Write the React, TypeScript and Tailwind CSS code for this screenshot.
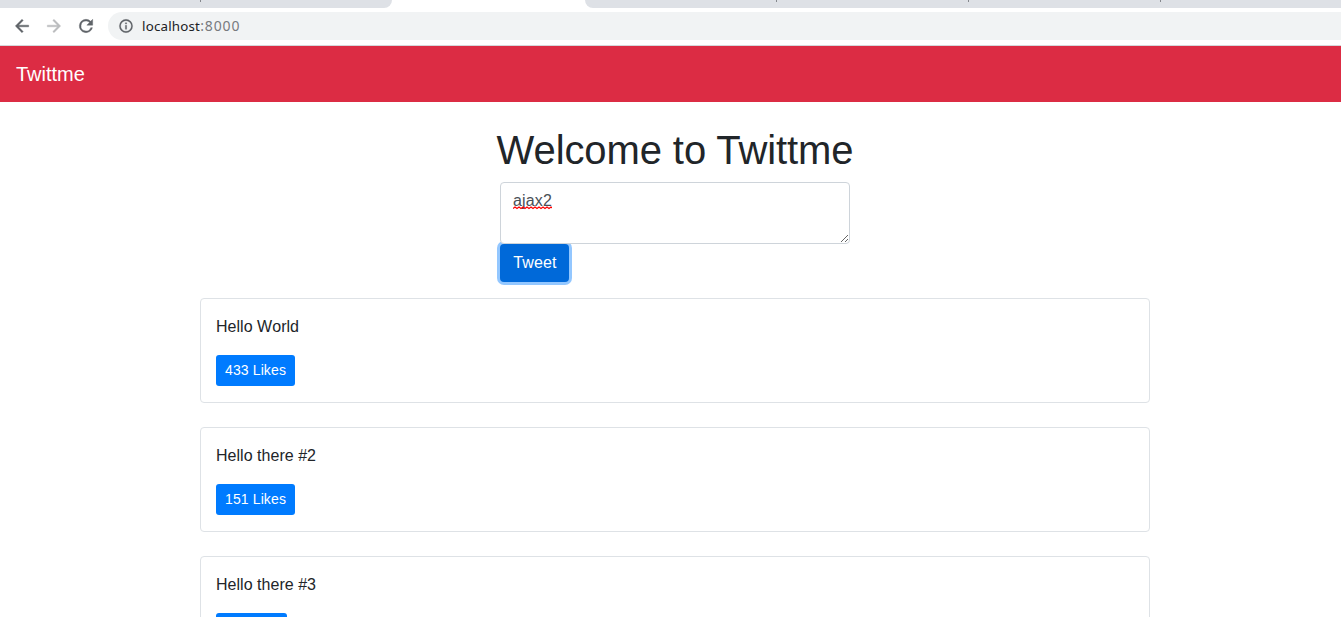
/**
 * Twittme home page
 *
 * Browser bar, brand navbar, tweet form and the tweet feed.
 */

interface Tweet {
    id: number
    content: string
    likes: number
}

const tweets: Tweet[] = [
    { id: 1, content: 'Hello World', likes: 433 },
    { id: 2, content: 'Hello there #2', likes: 151 },
    { id: 3, content: 'Hello there #3', likes: 12 },
]

function BrowserBar() {
    return (
        <div className="h-[46px] border-b border-[#d5d7da] bg-white">
            {/* Tab strip */}
            <div className="flex h-2">
                <div className="flex w-[392px] rounded-br-lg bg-[#dee1e6] pl-[200px]">
                    <span className="h-0.5 w-px bg-[#85888d]" />
                </div>
                <div className="w-[193px]" />
                <div className="flex flex-1 gap-[191px] rounded-bl-lg bg-[#dee1e6] pl-[191px]">
                    <span className="h-0.5 w-px bg-[#85888d]" />
                    <span className="h-0.5 w-px bg-[#85888d]" />
                    <span className="h-0.5 w-px bg-[#85888d]" />
                </div>
            </div>

            {/* Toolbar */}
            <div className="mt-1 flex h-7 items-center pl-3">
                <svg className="size-5 shrink-0" viewBox="0 0 24 24" fill="#5f6368">
                    <path d="M20 11H7.83l5.59-5.59L12 4l-8 8 8 8 1.41-1.41L7.83 13H20v-2z" stroke="#5f6368" strokeWidth="0.5" />
                </svg>
                <svg className="ml-3 size-5 shrink-0" viewBox="0 0 24 24" fill="#babcbe">
                    <path d="M12 4l-1.41 1.41L16.17 11H4v2h12.17l-5.58 5.59L12 20l8-8z" stroke="#babcbe" strokeWidth="0.5" />
                </svg>
                <svg className="ml-3 size-5 shrink-0" viewBox="0 0 24 24" fill="#5f6368">
                    <path d="M17.65 6.35A7.96 7.96 0 0 0 12 4a8 8 0 1 0 7.73 10h-2.08A6 6 0 1 1 12 6c1.66 0 3.14.69 4.22 1.78L13 11h7V4l-2.35 2.35z" stroke="#5f6368" strokeWidth="0.5" />
                </svg>
                <div className="ml-3 flex h-7 flex-1 items-center rounded-l-full bg-[#f1f3f4] pl-2.5">
                    <svg className="size-4 shrink-0" viewBox="0 0 24 24" fill="#5f6368">
                        <path d="M11 17h2v-6h-2v6zm1-15a10 10 0 1 0 0 20 10 10 0 0 0 0-20zm0 18a8 8 0 1 1 0-16 8 8 0 0 1 0 16zM11 9h2V7h-2v2z" stroke="#5f6368" strokeWidth="0.4" />
                    </svg>
                    <span className="ml-2 font-['Noto_Sans',sans-serif] text-[13.33px] leading-5 tracking-[0.2px] text-[#202124]">
                        localhost<span className="text-[14px] tracking-[0.9px] text-[#777a7e]">:8000</span>
                    </span>
                </div>
            </div>
        </div>
    )
}

function TweetForm() {
    return (
        <form className="mx-auto flex w-[350px] flex-col items-start">
            <div className="relative w-full">
                <textarea
                    className="block h-[62px] w-full resize rounded border border-[#ced4da] bg-white px-3 py-1.5 text-base leading-6 tracking-[0.15px] text-[#495057]"
                    defaultValue="ajax2"
                    spellCheck={false}
                />
                {/* Spelling underline */}
                <svg className="absolute left-[13px] top-[24px]" width="39" height="4" fill="none" stroke="#f00" strokeWidth="1.2">
                    <path d="M0 2.5l2-1.5 2 1.5 2-1.5 2 1.5 2-1.5 2 1.5 2-1.5 2 1.5 2-1.5 2 1.5 2-1.5 2 1.5 2-1.5 2 1.5 2-1.5 2 1.5 2-1.5 2 1.5 2-1.5 2 1.5" />
                </svg>
            </div>
            <button
                type="button"
                className="h-[38px] w-[69px] rounded bg-[#0069d9] pl-px text-base leading-6 tracking-[0.15px] text-white ring-[3px] ring-[#93c7ff]"
            >
                Tweet
            </button>
        </form>
    )
}

function TweetCard({ tweet }: { tweet: Tweet }) {
    return (
        <div className="mb-6 rounded border border-[#dee2e6] px-[15px] py-4">
            <p className="mb-4 text-base leading-6 tracking-[0.03px] [font-kerning:none]">{tweet.content}</p>
            <button
                type="button"
                className="block h-[31px] rounded-[3px] bg-[#007bff] px-[9px] text-sm leading-[21px] tracking-[0.12px] text-white"
            >
                {tweet.likes} Likes
            </button>
        </div>
    )
}

export default function App() {
    return (
        <div className="h-[617px] overflow-hidden bg-white font-['Liberation_Sans',sans-serif] text-[#212529]">
            <div className="w-[1350px]">
                <BrowserBar />

                <nav className="flex h-14 items-center bg-[#dc2c44] px-4">
                    <span className="text-xl leading-[30px] text-white">Twittme</span>
                </nav>

                <main className="pt-6">
                    <h1 className="mb-2 text-center text-[40px] leading-[48px] tracking-[-0.1px]">Welcome to Twittme</h1>
                    <TweetForm />

                    {/* Feed */}
                    <div className="mx-auto mt-4 w-[950px]">
                        {tweets.map((tweet) => (
                            <TweetCard key={tweet.id} tweet={tweet} />
                        ))}
                    </div>
                </main>
            </div>
        </div>
    )
}
